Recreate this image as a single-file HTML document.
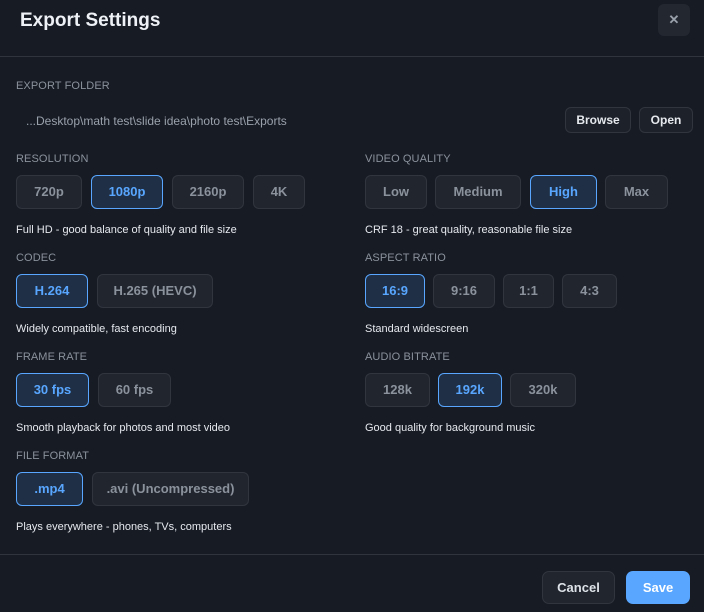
<!DOCTYPE html>
<html><head><meta charset="utf-8"><style>
*{box-sizing:border-box;margin:0;padding:0}
body{width:704px;height:612px;background:#171b24;font-family:"Liberation Sans",sans-serif;position:relative;overflow:hidden;color:#e6edf3}
.a{position:absolute}
.t{left:20px;top:10px;font-size:19px;font-weight:bold;color:#eef1f5}
.x{left:658px;top:4px;width:32px;height:32px;background:#232730;border-radius:6px;color:#9aa1ab;font-size:13px;font-weight:bold;text-align:center;line-height:32px}
.hr{left:0;width:704px;height:1px;background:#30343c}
.l{font-size:11px;color:#8b929c;letter-spacing:0.1px;line-height:12px}
.d{font-size:11px;color:#e6e9ee;line-height:12px}
.b{height:34px;background:#21252e;border:1px solid #30353e;border-radius:6px;color:#8b929c;font-size:13px;font-weight:bold;text-align:center;line-height:32px}
.s{background:#1f3046;border-color:#58a6ff;color:#58a6ff}
.sm{height:26px;line-height:24px;font-size:12px;color:#e6e9ee;border-radius:6px;background:#1d2129;border:1px solid #30353e;text-align:center;font-weight:bold}
</style></head><body>
<div class="a t">Export Settings</div>
<div class="a x">✕</div>
<div class="a hr" style="top:56px"></div>
<div class="a l" style="left:16px;top:80px">EXPORT FOLDER</div>
<div class="a" style="left:26px;top:114px;font-size:12px;color:#9aa1ab">...Desktop\math test\slide idea\photo test\Exports</div>
<div class="a sm" style="left:565px;top:107px;width:66px">Browse</div>
<div class="a sm" style="left:639px;top:107px;width:54px">Open</div>

<div class="a l" style="left:16px;top:153px">RESOLUTION</div>
<div class="a b" style="left:16px;top:175px;width:66px">720p</div>
<div class="a b s" style="left:91px;top:175px;width:72px">1080p</div>
<div class="a b" style="left:172px;top:175px;width:72px">2160p</div>
<div class="a b" style="left:253px;top:175px;width:52px">4K</div>
<div class="a d" style="left:16px;top:224px">Full HD - good balance of quality and file size</div>

<div class="a l" style="left:365px;top:153px">VIDEO QUALITY</div>
<div class="a b" style="left:365px;top:175px;width:62px">Low</div>
<div class="a b" style="left:435px;top:175px;width:86px">Medium</div>
<div class="a b s" style="left:530px;top:175px;width:67px">High</div>
<div class="a b" style="left:605px;top:175px;width:63px">Max</div>
<div class="a d" style="left:365px;top:224px">CRF 18 - great quality, reasonable file size</div>

<div class="a l" style="left:16px;top:252px">CODEC</div>
<div class="a b s" style="left:16px;top:274px;width:72px">H.264</div>
<div class="a b" style="left:97px;top:274px;width:116px">H.265 (HEVC)</div>
<div class="a d" style="left:16px;top:323px">Widely compatible, fast encoding</div>

<div class="a l" style="left:365px;top:252px">ASPECT RATIO</div>
<div class="a b s" style="left:365px;top:274px;width:60px">16:9</div>
<div class="a b" style="left:433px;top:274px;width:62px">9:16</div>
<div class="a b" style="left:503px;top:274px;width:51px">1:1</div>
<div class="a b" style="left:562px;top:274px;width:55px">4:3</div>
<div class="a d" style="left:365px;top:323px">Standard widescreen</div>

<div class="a l" style="left:16px;top:351px">FRAME RATE</div>
<div class="a b s" style="left:16px;top:373px;width:73px">30 fps</div>
<div class="a b" style="left:98px;top:373px;width:73px">60 fps</div>
<div class="a d" style="left:16px;top:422px">Smooth playback for photos and most video</div>

<div class="a l" style="left:365px;top:351px">AUDIO BITRATE</div>
<div class="a b" style="left:365px;top:373px;width:65px">128k</div>
<div class="a b s" style="left:438px;top:373px;width:64px">192k</div>
<div class="a b" style="left:510px;top:373px;width:66px">320k</div>
<div class="a d" style="left:365px;top:422px">Good quality for background music</div>

<div class="a l" style="left:16px;top:450px">FILE FORMAT</div>
<div class="a b s" style="left:16px;top:472px;width:67px">.mp4</div>
<div class="a b" style="left:92px;top:472px;width:157px">.avi (Uncompressed)</div>
<div class="a d" style="left:16px;top:521px">Plays everywhere - phones, TVs, computers</div>

<div class="a hr" style="top:554px"></div>
<div class="a" style="left:542px;top:571px;width:73px;height:33px;background:#21252e;border:1px solid #30353e;border-radius:7px;color:#dde2e8;font-size:13px;font-weight:bold;text-align:center;line-height:31px">Cancel</div>
<div class="a" style="left:626px;top:571px;width:64px;height:33px;background:#58a6ff;border-radius:7px;color:#fff;font-size:13px;font-weight:bold;text-align:center;line-height:33px">Save</div>
</body></html>
